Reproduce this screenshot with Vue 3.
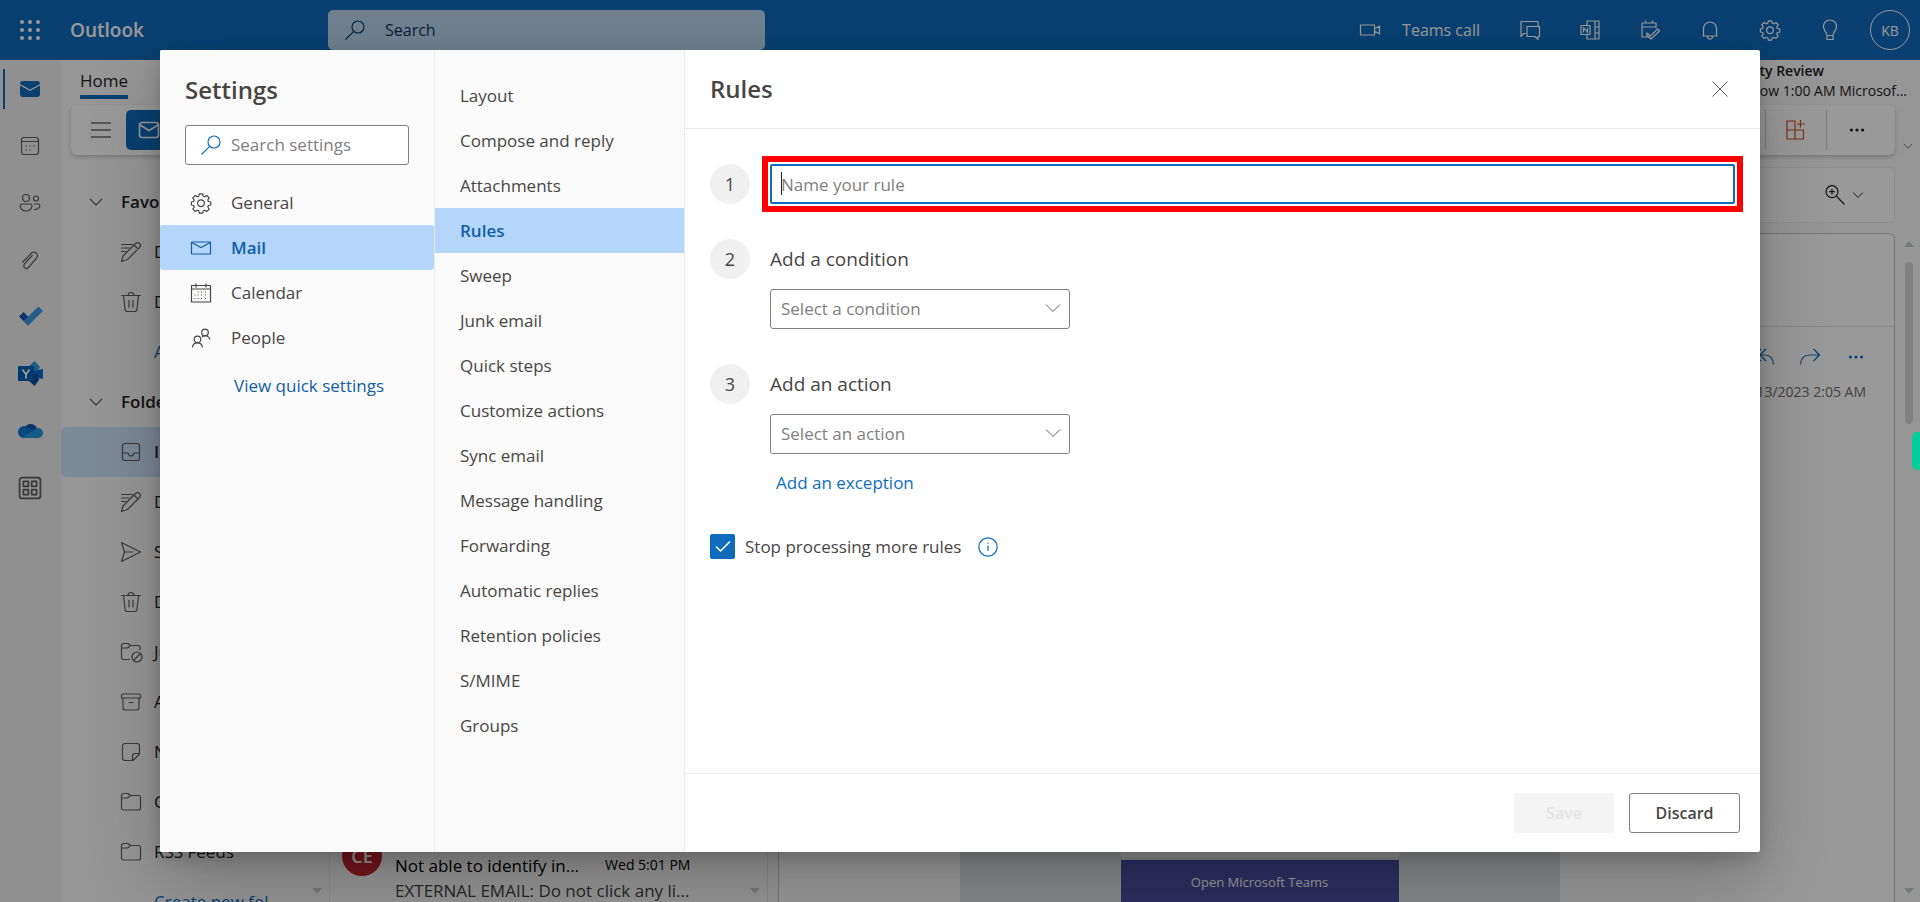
<script setup>
import { h, ref } from 'vue'

const glyphs = {
  search: ['M13 1a6 6 0 1 1 0 12a6 6 0 1 1 0-12', 'M8.7 11.3L.5 19.5'],
  gear: ['M8.3.8h3.4l.5 2.4 1.5.6 2.1-1.3 2.4 2.4-1.4 2.1.6 1.5 2.4.5v3l-2.4.5-.6 1.5 1.4 2.1-2.4 2.4-2.1-1.3-1.5.6-.5 2.4H8.3l-.5-2.4-1.5-.6-2.1 1.3-2.4-2.4 1.4-2.1-.6-1.5-2.2-.5V9l2.2-.5.6-1.5-1.4-2.1 2.4-2.4 2.1 1.3 1.5-.6z', 'M10 6.8a3.4 3.4 0 1 1 0 6.8a3.4 3.4 0 1 1 0-6.8'],
  mail: ['M.5 4h19v12H.5z', 'M.5 4.5L10 9.5l9.5-5'],
  calendar: ['M.5 2.5h19v16.500H.5z', 'M.5 6h19M5 .5v4M15 .5v4', 'M6.500 9h1M10 9h1M14 9h1M3.500 12h1M6.500 12h1M10 12h1M14 12h1M3.500 15.500h1M6.500 15.500h1M10 15.500h1M14 15.500h1'],
  people: ['M14 1.200a3.300 3.300 0 1 1 0 6.600a3.300 3.300 0 1 1 0-6.600', 'M6.500 8.200a3.300 3.300 0 1 1 0 6.600a3.300 3.300 0 1 1 0-6.600', 'M1.500 19.500c.3-6.300 9.500-6.300 9.800 0M11 9c3-2.600 7.500-1 8 2.500'],
  video: ['M.5 5h14v10H.5zM14.500 9L19.500 6v8l-5-3'],
  chat: ['M6 13.500H3.500L1 16.500V1.500h17V6', 'M7 6.500h12.500v10H18v3l-3-3H7z'],
  onenote: ['M7 5V1h12v18H7v-4M15 1v18M15 7h4M15 13h4', 'M1 5.500h9v9H1zM3.500 12.500v-5l4 5v-5'],
  todoCal: ['M10 17H2V3h14v5M2 7h14M5.500 3V.5M12.500 3V.5', 'M7 13l3.500 3 7-7 2 2-8.500 8-4.500-4z'],
  bell: ['M3.500 16V8.500a6.500 6.500 0 0 1 13 0V16zM2.500 16h15M7.500 16c0 4.300 5 4.300 5 0'],
  bulb: ['M7 15.500c0-4-3.500-4.500-3.500-9a6.500 6.500 0 0 1 13 0c0 4.500-3.500 5-3.500 9zM7 15.500v4h6v-4'],
  calRail: ['M4 1.500h12a2.500 2.500 0 0 1 2.500 2.500v12a2.500 2.500 0 0 1-2.500 2.500H4A2.500 2.500 0 0 1 1.500 16V4A2.500 2.500 0 0 1 4 1.500zM1.500 5.500h17', 'M5.500 10h1.500M9.300 10h1.500M13 10h1.500M5.500 14h1.500M9.300 14h1.500'],
  peopleRail: ['M6 1.500a3.500 3.500 0 1 1 0 7a3.500 3.500 0 1 1 0-7M16 3a2.500 2.500 0 1 1 0 5a2.500 2.500 0 1 1 0-5', 'M2 11h8.500c3 0 1.500 7-4.500 7S-1 11 2 11zM14 11h4.500c2.500 0 1.500 6-4.500 5.500'],
  clip: ['M4.500 10.500L11 3.500c3-3.500 8.500.5 5.500 4.500L8.500 17.500c-2.500 2.500-6-.5-4-3.500l8-9M2.500 12.500l3-3.500'],
  apps: ['M3 .5h14A2.500 2.500 0 0 1 19.500 3v14a2.500 2.500 0 0 1-2.500 2.500H3A2.500 2.500 0 0 1 .5 17V3A2.500 2.500 0 0 1 3 .5z', 'M4 4h4.500v4.500H4zM11.500 4H16v4.500h-4.500zM4 11.500h4.500V16H4zM11.500 11.500H16V16h-4.500z'],
  menu: ['M0 3h20M0 10h20M0 17h20'],
  newMail: ['M3 2.500h14A2.500 2.500 0 0 1 19.500 5v10a2.500 2.500 0 0 1-2.500 2.500H3A2.500 2.500 0 0 1 .5 15V5A2.500 2.500 0 0 1 3 2.500z', 'M1 5l9 5.500L19 5'],
  down: ['M4 7l6 6 6-6'],
  wideDown: ['M3 6.500l7 7 7-7'],
  draft: ['M0 2.500h12M0 6h8.500M0 9.500h5', 'M.5 19.500l1.500-5.500L14.500 1.500c3-2.500 6.500 1 4 4L6.500 17.500zM13 3l4.500 4.500'],
  trash: ['M0 3.500h20M7 3.500c0-4 6-4 6 0M2.500 3.500l1.500 13.500a2.500 2.500 0 0 0 2.500 2.500h7a2.500 2.500 0 0 0 2.500-2.500L17.500 3.500M8 8v7.500M12 8v7.500'],
  inbox: ['M4 1.500h12a2.500 2.500 0 0 1 2.500 2.500v12a2.500 2.500 0 0 1-2.500 2.500H4A2.500 2.500 0 0 1 1.500 16V4A2.500 2.500 0 0 1 4 1.500z', 'M1.500 11H7c1 4 5 4 6 0h5.500'],
  send: ['M.5.5L19.500 10 .5 19.500 3.500 10zM3.500 10H12'],
  junk: ['M9 17.500H2.500a2 2 0 0 1-2-2v-12a2 2 0 0 1 2-2H7l2.500 2H17a2 2 0 0 1 2 2V8M.5 6h6l3-2.500', 'M16 10a5 5 0 1 1 0 10a5 5 0 1 1 0-10M12.500 18.500l7-7'],
  archive: ['M2 2h16a1.500 1.500 0 0 1 1.500 1.500V6H.5V3.500A1.500 1.500 0 0 1 2 2zM2 6v9.500a2.500 2.500 0 0 0 2.500 2.500h11a2.500 2.500 0 0 0 2.500-2.500V6M7.500 10.500h5'],
  note: ['M4 1.500h12A2.500 2.500 0 0 1 18.500 4v8L12 18.500H4A2.500 2.500 0 0 1 1.500 16V4A2.500 2.500 0 0 1 4 1.500zM18.500 11.500H14a2.500 2.500 0 0 0-2.500 2.500v4.500'],
  folder: ['M2.500 1.500H7l2.500 2h8a2 2 0 0 1 2 2v10.500a2 2 0 0 1-2 2h-15a2 2 0 0 1-2-2V3.500a2 2 0 0 1 2-2zM.5 6h6l3-2.500'],
  addins: ['M1 1h8v9H1zM1 10h8v9H1zM9 10h8.500v9H9zM14.500 0v7.500M11 4h8'],
  zoomIn: ['M7 .7a6 6 0 1 1 0 12a6 6 0 1 1 0-12M11.200 11L19.500 19.500M7 4v5.500M4.200 6.700h5.600'],
  replyAll: ['M7 2L1 8l6 6M12 2L6 8l6 6M6 8h5c5 0 8.500 4 8.500 9.500'],
  forward: ['M13.500 2l6 6-6 6M19.500 8H9.500C4 8 .5 12 .5 17.500'],
  close: ['M2.500 2.500l15 15M17.500 2.500l-15 15'],
  info: ['M10 .8a9.200 9.200 0 1 1 0 18.400a9.200 9.200 0 1 1 0-18.400M10 8.500V14M10 5.500v1.200'],
}
const Icon = ({ name }) =>
  h('svg', { class: 'icon', viewBox: '0 0 20 20', 'aria-hidden': 'true' }, glyphs[name].map((d) => h('path', { d })))
Icon.props = ['name']

const dots = [3, 11, 19]
const topActions = [
  ['chat', 'Chat'], ['onenote', 'OneNote feed'], ['todoCal', 'My Day'],
  ['bell', 'Notifications'], ['gear', 'Settings'], ['bulb', 'Tips'],
]
const folders = [
  { head: 'Favorites' }, { icon: 'draft', name: 'Drafts' }, { icon: 'trash', name: 'Deleted' }, { link: 'Add' },
  { head: 'Folders' }, { icon: 'inbox', name: 'Inbox', active: true }, { icon: 'draft', name: 'Drafts' },
  { icon: 'send', name: 'Sent Items' }, { icon: 'trash', name: 'Deleted Items' }, { icon: 'junk', name: 'Junk Email' },
  { icon: 'archive', name: 'Archive' }, { icon: 'note', name: 'Notes' }, { icon: 'folder', name: 'Conversation' },
  { icon: 'folder', name: 'RSS Feeds' }, { link: 'Create new fol...' },
]
const categories = [['gear', 'General'], ['mail', 'Mail'], ['calendar', 'Calendar'], ['people', 'People']]
const sections = [
  'Layout', 'Compose and reply', 'Attachments', 'Rules', 'Sweep', 'Junk email', 'Quick steps', 'Customize actions',
  'Sync email', 'Message handling', 'Forwarding', 'Automatic replies', 'Retention policies', 'S/MIME', 'Groups',
]
const category = ref('Mail')
const section = ref('Rules')
const query = ref('')
const ruleName = ref('')
const stop = ref(true)
</script>

<template>
  <div class="app">
    <header class="topbar">
      <button class="plain waffle" aria-label="App launcher">
        <svg class="solid" viewBox="0 0 22 22">
          <template v-for="y in dots" :key="y"><circle v-for="x in dots" :key="x" :cx="x" :cy="y" r="2" /></template>
        </svg>
      </button>
      <span class="brand">Outlook</span>
      <label class="global-search"><Icon name="search" /><input type="search" placeholder="Search" aria-label="Search" /></label>
      <button class="plain teams"><Icon name="video" />Teams call</button>
      <button v-for="a in topActions" :key="a[0]" class="plain top-action" :aria-label="a[1]"><Icon :name="a[0]" /></button>
      <button class="plain top-action" aria-label="Account"><span class="me">KB</span></button>
    </header>

    <div class="workspace">
      <nav class="rail" aria-label="Apps">
        <a href="#" class="current" aria-label="Mail">
          <svg class="solid" viewBox="0 0 20 20"><path d="M3 2h14a3 3 0 0 1 3 3L10 10.500 0 5a3 3 0 0 1 3-3zM0 6.500l10 5.500 10-5.500V15a3 3 0 0 1-3 3H3a3 3 0 0 1-3-3z" /></svg>
        </a>
        <a href="#" aria-label="Calendar"><Icon name="calRail" /></a>
        <a href="#" aria-label="People"><Icon name="peopleRail" class="wide" /></a>
        <a href="#" aria-label="Files"><Icon name="clip" /></a>
        <a href="#" aria-label="To Do">
          <svg class="logo" viewBox="0 0 25 25"><path d="M1 12.500l4.500-4.500 9 9-4.500 4.500z" fill="#1a53b5" /><path d="M5.500 17L20.500 2.500l4.500 4.500L10 21.500z" fill="#3f9be6" /></svg>
        </a>
        <a href="#" aria-label="Yammer">
          <svg class="logo" viewBox="0 0 25 25"><path d="M16.500 0l5.500 6-4 7h-8V6z" fill="#2b9fe0" /><path d="M25 8v10l-9-2v-6z" fill="#0f6cd6" /><path d="M10 13h10l1 6-4.500 6-6.500-6z" fill="#0b4fa0" /><rect y="5" width="16" height="15" rx="1" fill="#0563b8" /><path d="M4.500 8.500L8 13.500l3.500-5M8 13v4.500" fill="none" stroke="#fff" stroke-width="1.800" /></svg>
        </a>
        <a href="#" aria-label="OneDrive">
          <svg class="logo" viewBox="0 0 25 25"><path d="M6 12c1-7 10-8 13-2l-5 6z" fill="#0a5aa8" /><path d="M6 20a6 6 0 1 1 4-10.500L19 15l-8 5z" fill="#0c78d4" /><path d="M4 19.500L17.500 11c4-2.500 7.500.5 7.500 4a5 5 0 0 1-5 5H6z" fill="#2796dd" /></svg>
        </a>
        <a href="#" aria-label="More apps"><Icon name="apps" class="bold" /></a>
      </nav>

      <div class="content">
        <div class="tabs">
          <a href="#" class="tab">Home</a>
          <div class="upcoming"><strong>Security Review</strong><span>Tomorrow 1:00 AM Microsof...</span></div>
        </div>
        <div class="ribbon-row">
          <div class="ribbon">
            <button class="plain burger" aria-label="Toggle navigation"><Icon name="menu" /></button>
            <button class="new-mail"><Icon name="newMail" />New mail</button>
            <span class="grow"></span>
            <button class="plain cell addins" aria-label="Add-ins"><Icon name="addins" /></button>
            <button class="plain cell" aria-label="More"><svg class="solid more" viewBox="0 0 20 20"><circle cx="3" cy="10" r="2" /><circle cx="10" cy="10" r="2" /><circle cx="17" cy="10" r="2" /></svg></button>
          </div>
          <button class="plain expand" aria-label="Ribbon options"><Icon name="down" /></button>
        </div>

        <div class="panes">
          <nav class="folders" aria-label="Folders">
            <template v-for="(f, i) in folders" :key="i">
              <button v-if="f.head" class="plain folder head"><Icon name="down" />{{ f.head }}</button>
              <a v-else-if="f.link" href="#" class="folder link">{{ f.link }}</a>
              <a v-else href="#" class="folder" :class="{ active: f.active }"><Icon :name="f.icon" />{{ f.name }}</a>
            </template>
            <i class="arrow-down"></i>
          </nav>
          <section class="messages">
            <article class="message">
              <span class="sender">CE</span>
              <div class="message-text">
                <p class="subject">Not able to identify in...<time>Wed 5:01 PM</time></p>
                <p class="preview">EXTERNAL EMAIL: Do not click any li...</p>
              </div>
            </article>
            <i class="arrow-down"></i>
          </section>
          <section class="reading">
            <div class="toolbar"><button class="plain zoom" aria-label="Zoom"><Icon name="zoomIn" /><Icon name="down" class="tiny" /></button></div>
            <article class="mail">
              <div class="mail-title"></div>
              <div class="mail-actions">
                <button class="plain" aria-label="Reply all"><Icon name="replyAll" /></button>
                <button class="plain" aria-label="Forward"><Icon name="forward" /></button>
                <button class="plain" aria-label="More actions"><svg class="solid more" viewBox="0 0 20 20"><circle cx="3" cy="10" r="2" /><circle cx="10" cy="10" r="2" /><circle cx="17" cy="10" r="2" /></svg></button>
              </div>
              <time class="date">Mon 2/13/2023 2:05 AM</time>
              <div class="mail-body"><div class="mail-card"></div><a href="#" class="open-teams">Open Microsoft Teams</a></div>
            </article>
          </section>
          <div class="scroll"><i class="arrow-up"></i><span class="thumb"></span><i class="arrow-down"></i></div>
        </div>
      </div>
    </div>

    <div class="overlay">
      <div class="dialog" role="dialog" aria-label="Settings">
        <nav class="categories" aria-label="Settings categories">
          <h1>Settings</h1>
          <label class="settings-search"><Icon name="search" /><input v-model="query" type="search" placeholder="Search settings" aria-label="Search settings" /></label>
          <button v-for="c in categories" :key="c[1]" class="category" :class="{ active: category === c[1] }" @click="category = c[1]"><Icon :name="c[0]" />{{ c[1] }}</button>
          <a href="#" class="quick">View quick settings</a>
        </nav>
        <nav class="sections" aria-label="Mail settings">
          <button v-for="s in sections" :key="s" :class="{ active: section === s }" @click="section = s">{{ s }}</button>
        </nav>
        <form class="rules" @submit.prevent>
          <header class="rules-head"><h2>Rules</h2><button type="button" class="plain close" aria-label="Close"><Icon name="close" /></button></header>
          <div class="rules-body">
            <div class="step first">
              <span class="number">1</span>
              <div class="name-field"><input v-model="ruleName" type="text" placeholder="Name your rule" aria-label="Rule name" /><i class="caret"></i></div>
            </div>
            <div class="step">
              <span class="number">2</span>
              <div class="field">
                <label for="condition">Add a condition</label>
                <div class="picker"><select id="condition"><option>Select a condition</option></select><Icon name="wideDown" /></div>
              </div>
            </div>
            <div class="step">
              <span class="number">3</span>
              <div class="field">
                <label for="action">Add an action</label>
                <div class="picker"><select id="action"><option>Select an action</option></select><Icon name="wideDown" /></div>
                <a href="#" class="exception">Add an exception</a>
              </div>
            </div>
            <div class="stop">
              <span class="check"><input id="stop" v-model="stop" type="checkbox" /><svg v-if="stop" viewBox="0 0 25 25" aria-hidden="true"><path d="M6 12.500l4.500 4.500L20 7.500" /></svg></span>
              <label for="stop">Stop processing more rules</label>
              <button type="button" class="plain info" aria-label="More information"><Icon name="info" /></button>
            </div>
          </div>
          <footer><button class="save" disabled>Save</button><button type="button" class="discard">Discard</button></footer>
        </form>
      </div>
    </div>
    <button class="edge-tab" aria-label="Open side panel"></button>
  </div>
</template>

<style>
body { overflow: hidden; }
</style>

<style scoped>
* { box-sizing: border-box; }
.app { position: relative; display: flex; flex-direction: column; height: 100vh; overflow: hidden; background: #fafafa; font: 17px/24px "Open Sans", "Noto Sans", sans-serif; color: #242424; }
button, input, select { font: inherit; color: inherit; }
a { color: inherit; text-decoration: none; }
h1, h2, p { margin: 0; }
.plain { display: flex; align-items: center; justify-content: center; padding: 0; border: 0; background: none; }
.icon { flex: none; width: 20px; height: 20px; fill: none; stroke: currentColor; stroke-width: 1.2; stroke-linejoin: round; overflow: visible; }
.solid { width: 20px; height: 20px; fill: currentColor; }
.more { width: 16px; height: 16px; }
.grow { flex: 1; }

.topbar { flex: none; display: flex; align-items: center; height: 60px; background: #0f6cbd; color: #fff; font-size: 16px; }
.waffle { width: 60px; height: 60px; }
.waffle svg { width: 22px; height: 22px; }
.brand { width: 258px; margin-left: 10px; font-size: 19px; font-weight: 600; }
.global-search { display: flex; align-items: center; gap: 20px; width: 437px; height: 40px; margin-right: auto; padding: 0 17px; border-radius: 5px; background: #b9d8ee; color: #0c3b5e; }
.global-search input, .settings-search input { flex: 1; min-width: 0; padding: 0; border: 0; outline: 0; background: none; }
.global-search input::placeholder { color: #0c3b5e; }
.teams { gap: 22px; margin-right: 20px; }
.top-action { width: 60px; height: 60px; }
.me { width: 40px; height: 40px; border: 1px solid #fff; border-radius: 50%; font-size: 14px; line-height: 40px; }

.workspace { flex: 1; display: flex; min-height: 0; }
.rail { flex: none; width: 61px; border-right: 1px solid #f3f3f3; background: #f0f0f0; color: #616161; }
.rail a { position: relative; display: flex; align-items: center; justify-content: center; height: 57px; }
.rail .current { color: #0f6cbd; }
.rail .current::before { content: ""; position: absolute; left: 3px; top: 9px; width: 2px; height: 40px; background: #0f6cbd; }
.rail .logo { width: 25px; height: 25px; }
.rail .wide { width: 22px; height: 20px; }
.rail .bold { width: 22px; height: 22px; stroke-width: 1.6; }

.content { flex: 1; display: flex; flex-direction: column; min-width: 0; }
.tabs { flex: none; display: flex; justify-content: space-between; height: 45px; padding: 0 13px 0 19px; }
.tab { height: 39px; padding-top: 9px; border-bottom: 4px solid #0f6cbd; }
.upcoming { display: flex; flex-direction: column; align-items: flex-end; padding-top: 1px; font-size: 14px; line-height: 20px; }
.upcoming strong { padding-right: 83px; font-weight: 600; }
.ribbon-row { flex: none; display: flex; height: 50px; padding-left: 10px; }
.ribbon { flex: 1; display: flex; align-items: center; border-radius: 6px; background: #fff; box-shadow: 0 2px 4px rgba(0, 0, 0, .2); }
.burger { width: 40px; margin: 0 5px 0 10px; }
.burger .icon { height: 20px; width: 20px; }
.new-mail { display: flex; align-items: center; gap: 8px; height: 40px; padding: 0 13px; border: 0; border-radius: 5px; background: #0f6cbd; color: #fff; }
.new-mail .icon { stroke-width: 1.6; }
.cell { width: 61px; height: 40px; border-left: 1px solid #d1d1d1; }
.cell:last-child { margin-right: 8px; }
.addins { color: #d0501c; }
.expand { align-items: flex-end; width: 25px; padding-bottom: 2px; color: #616161; }
.expand .icon { width: 14px; height: 14px; }

.panes { flex: 1; display: flex; min-height: 0; }
.folders { position: relative; flex: none; width: 269px; padding-top: 22px; border-right: 1px solid #e6e6e6; overflow: hidden; }
.folder { display: flex; align-items: center; gap: 13px; width: 100%; height: 50px; padding-left: 60px; white-space: nowrap; }
.folder .icon { color: #616161; }
.head { justify-content: flex-start; gap: 15px; padding-left: 25px; font-weight: 600; }
.link { padding-left: 93px; color: #0f6cbd; }
.active.folder { border-radius: 6px; background: #cfe4fa; font-weight: 600; }
.arrow-down, .arrow-up { position: absolute; right: 7px; bottom: 8px; border: 5px solid transparent; border-bottom: 0; border-top: 6px solid #c4c8cb; }
.messages { position: relative; flex: none; display: flex; flex-direction: column; justify-content: flex-end; width: 438px; border-right: 1px solid #e6e6e6; }
.message { display: flex; align-items: flex-start; gap: 13px; padding: 0 0 0 12px; }
.sender { flex: none; width: 40px; height: 40px; border-radius: 50%; background: #c5262f; color: #fff; font-size: 18px; font-weight: 600; line-height: 40px; text-align: center; }
.message-text { padding-top: 17px; white-space: nowrap; }
.subject { display: flex; gap: 26px; color: #000; line-height: 26px; }
.subject time { font-size: 14px; line-height: 24px; }
.preview { color: #424242; line-height: 23px; }
.reading { flex: 1; display: flex; flex-direction: column; min-width: 0; padding: 12px 0 0 10px; }
.toolbar { flex: none; display: flex; align-items: center; justify-content: flex-end; height: 56px; padding-right: 28px; border: 1px solid #ededed; border-radius: 6px; background: #fff; }
.zoom { gap: 5px; }
.tiny { width: 16px; height: 16px; }
.mail { flex: 1; display: flex; flex-direction: column; min-height: 0; margin-top: 10px; border: 1px solid #c8c8c8; border-bottom: 0; border-radius: 6px 6px 0 0; background: #fff; }
.mail-title { flex: none; height: 93px; border-bottom: 1px solid #e0e0e0; }
.mail-actions { flex: none; display: flex; justify-content: flex-end; gap: 26px; padding: 20px 28px 0 0; color: #0f6cbd; }
.mail-actions .more { width: 20px; height: 16px; }
.date { align-self: flex-end; margin: 13px 28px 0 0; color: #707070; font-size: 14px; }
.mail-body { display: flex; flex-direction: column; align-items: center; width: 600px; margin: auto 30% 0 auto; background: #e1e4e8; }
.mail-card { width: 278px; height: 20px; margin-bottom: 3px; background: #f3f2f1; }
.open-teams { width: 278px; height: 42px; background: #4e4fa3; color: #fff; font-size: 13px; line-height: 44px; text-align: center; }
.scroll { position: relative; flex: none; width: 25px; padding: 107px 7px 0 10px; }
.scroll .thumb { display: block; width: 8px; height: 162px; border-radius: 4px; background: #d8d8d8; }
.scroll .arrow-up { top: 86px; bottom: auto; right: 6px; border: 5px solid transparent; border-top: 0; border-bottom: 6px solid #c4c8cb; }
.scroll .arrow-down { right: 6px; }

.overlay { position: absolute; inset: 0; display: flex; padding: 50px 160px; background: rgba(0, 0, 0, .4); }
.dialog { flex: 1; display: grid; grid-template-columns: 275px 250px 1fr; min-width: 0; border-radius: 2px; background: #fff; box-shadow: 0 32px 72px rgba(0, 0, 0, .22), 0 6px 18px rgba(0, 0, 0, .18); color: #484644; overflow: hidden; }
.categories, .sections { border-right: 1px solid #ebebeb; background: #fafafa; }
h1, h2 { font-size: 24px; line-height: 30px; font-weight: 600; }
h1 { padding: 25px 25px 20px; }
.settings-search { display: flex; align-items: center; gap: 10px; height: 40px; margin: 0 25px 15px; padding: 0 15px; border: 1px solid #808080; border-radius: 3px; background: #fff; color: #0f6cbd; }
.settings-search input { color: #424242; }
.settings-search input::placeholder, .name-field input::placeholder { color: #808080; opacity: 1; }
.category, .sections button { display: flex; align-items: center; gap: 20px; width: 100%; height: 45px; padding: 0 31px; border: 0; background: none; text-align: left; }
.category.active { border-radius: 3px; }
.category.active, .sections .active { background: #b4d6fa; color: #115ea3; font-weight: 600; }
.quick { display: block; margin: 14px 0 0 74px; color: #115ea3; }
.sections { padding-top: 23px; }
.sections button { padding: 0 25px; }
.rules { display: flex; flex-direction: column; min-width: 0; }
.rules-head { display: flex; align-items: center; justify-content: space-between; height: 79px; padding: 0 30px 0 25px; border-bottom: 1px solid #ebebeb; }
.close { color: #605e5c; }
.close .icon { stroke-width: 1; }
.rules-body { flex: 1; padding: 35px 25px 0; }
.step { display: flex; gap: 20px; height: 125px; }
.first { height: 75px; }
.number { flex: none; width: 40px; height: 40px; border-radius: 50%; background: #f0f0f0; font-size: 18px; line-height: 40px; text-align: center; }
.name-field { position: relative; flex: 1; height: 40px; outline: 6px solid #f00; outline-offset: 2px; }
.name-field input { display: block; width: 100%; height: 40px; padding: 0 9px; border: 2px solid #0f6cbd; border-radius: 2px; outline: 0; }
.caret { position: absolute; left: 11px; top: 8px; width: 1px; height: 23px; background: #242424; }
.field label { display: block; height: 50px; font-size: 19px; line-height: 40px; }
.picker { position: relative; width: 300px; }
.picker select { display: block; width: 100%; height: 40px; padding: 0 10px; border: 1px solid #808080; border-radius: 3px; appearance: none; background: #fff; color: #808080; }
.picker .icon { position: absolute; right: 7px; top: 9px; pointer-events: none; color: #616161; stroke-width: 1; }
.exception { display: block; margin: 17px 0 0 6px; color: #0f6cbd; }
.stop { display: flex; align-items: center; height: 25px; margin-top: 45px; }
.check { position: relative; width: 25px; height: 25px; margin-right: 10px; }
.check input { display: block; width: 25px; height: 25px; margin: 0; appearance: none; border: 1px solid #0f6cbd; border-radius: 2px; }
.check input:checked { background: #0f6cbd; }
.check svg { position: absolute; inset: 0; pointer-events: none; fill: none; stroke: #fff; stroke-width: 1.5; }
.info { margin-left: 17px; color: #0f6cbd; }
footer { display: flex; justify-content: flex-end; gap: 15px; height: 79px; padding: 19px 20px; border-top: 1px solid #ebebeb; }
footer button { height: 40px; border-radius: 3px; font-size: 16px; font-weight: 600; }
.save { width: 100px; border: 0; background: #f4f4f4; color: #e4e4e4; }
.discard { width: 111px; border: 1px solid #808080; background: #fff; }
.edge-tab { position: absolute; right: 0; top: 432px; width: 8px; height: 38px; padding: 0; border: 0; border-radius: 5px 0 0 5px; background: #00cc99; }
</style>
